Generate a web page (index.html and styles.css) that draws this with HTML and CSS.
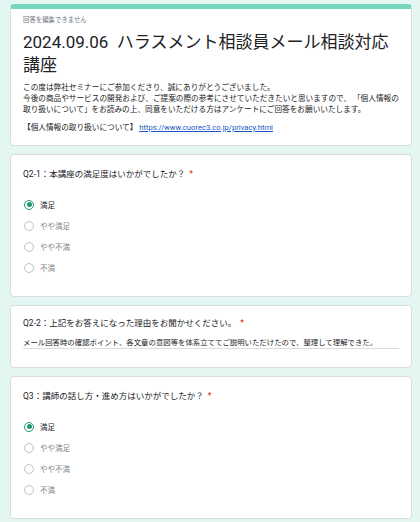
FILE: index.html
```html
<!DOCTYPE html>
<html lang="ja">
<head>
    <meta charset="UTF-8">
    <title>2024.09.06 ハラスメント相談員メール相談対応講座</title>
    <link rel="stylesheet" href="styles.css">
</head>
<body>
<div class="form">
    <div class="card head">
        <p class="note">回答を編集できません</p>
        <h1 class="title">2024.09.06&nbsp; ハラスメント相談員メール相談対応講座</h1>
        <p class="desc">この度は弊社セミナーにご参加くださり、誠にありがとうございました。<br>今後の商品やサービスの開発および、ご提案の際の参考にさせていただきたいと思いますので、 「個人情報の取り扱いについて」をお読みの上、同意をいただける方はアンケートにご回答をお願いいたします。</p>
        <p class="desc link-line">【個人情報の取り扱いについて】 <a href="#">https://www.cuorec3.co.jp/privacy.html</a></p>
    </div>

    <div class="card question">
        <div class="q-title">Q2-1：本講座の満足度はいかがでしたか？<span class="req">*</span></div>
        <ul class="options">
            <li class="checked"><span class="radio"></span>満足</li>
            <li><span class="radio"></span>やや満足</li>
            <li><span class="radio"></span>やや不満</li>
            <li><span class="radio"></span>不満</li>
        </ul>
    </div>

    <div class="card question text-q">
        <div class="q-title">Q2-2：上記をお答えになった理由をお聞かせください。<span class="req">*</span></div>
        <div class="answer">メール回答時の確認ポイント、各文章の意図等を体系立ててご説明いただけたので、整理して理解できた。</div>
    </div>

    <div class="card question">
        <div class="q-title">Q3：講師の話し方・進め方はいかがでしたか？<span class="req">*</span></div>
        <ul class="options">
            <li class="checked"><span class="radio"></span>満足</li>
            <li><span class="radio"></span>やや満足</li>
            <li><span class="radio"></span>やや不満</li>
            <li><span class="radio"></span>不満</li>
        </ul>
    </div>
</div>
</body>
</html>
```

FILE: styles.css
```css
*{
    margin: 0;
    padding: 0;
    box-sizing: border-box;
}
body{
    background: #e3f6f1;
    font-family: Roboto, "Noto Sans CJK JP", sans-serif;
    color: #202124;
}
ul{
    list-style: none;
}
.form{
    width: 402px;
    margin-left: 10px;
    padding-top: 4px;
}
.card{
    background: #fff;
    border: 1px solid #dadce0;
    border-radius: 4px;
    margin-bottom: 8px;
    padding: 12px 12px 18px;
}
.head{
    border-top: 5px solid #72d7bc;
    padding: 7px 12px 12px;
}
.note{
    font-size: 6.4px;
    line-height: 9px;
    color: #70757a;
}
.title{
    margin-top: 6px;
    font-size: 17px;
    font-weight: 400;
    line-height: 23px;
}
.desc{
    margin-top: 5px;
    font-size: 7.65px;
    line-height: 11px;
}
.link-line{
    margin-top: 7px;
}
.link-line a{
    color: #1a55c8;
}
.q-title{
    font-size: 8.5px;
    line-height: 14px;
}
.req{
    color: #d93025;
    margin-left: 4px;
}
.options{
    margin-top: 13px;
}
.options li{
    display: flex;
    align-items: center;
    height: 21px;
    font-size: 7.5px;
    color: #80868b;
}
.options li.checked{
    color: #202124;
}
.radio{
    width: 10px;
    height: 10px;
    margin: 0 6px 0 1px;
    border: 1px solid #bdc1c6;
    border-radius: 50%;
    display: flex;
    align-items: center;
    justify-content: center;
}
.checked .radio{
    border-color: #1f9b6c;
}
.checked .radio::after{
    content: "";
    width: 5px;
    height: 5px;
    border-radius: 50%;
    background: #1f9b6c;
}
.text-q{
    padding-top: 10px;
}
.answer{
    margin-top: 7px;
    font-size: 7.4px;
    line-height: 11px;
    border-bottom: 1px solid #dadce0;
}
```
